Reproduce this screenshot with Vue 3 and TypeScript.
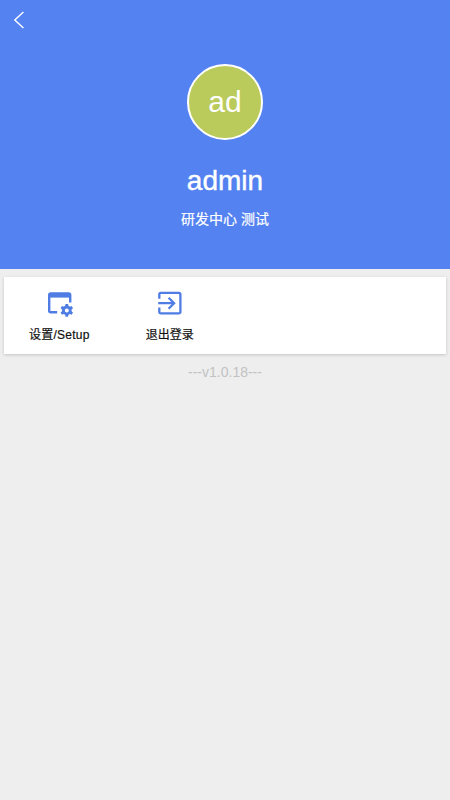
<script setup lang="ts">
interface Action {
  id: 'setup' | 'logout'
  label: string
}

const user = { name: 'admin', initials: 'ad', department: '研发中心 测试' }
const version = '---v1.0.18---'
const actions: Action[] = [
  { id: 'setup', label: '设置/Setup' },
  { id: 'logout', label: '退出登录' },
]
const teeth: number[] = [0, 60, 120, 180, 240, 300]
</script>

<template>
  <main class="page">
    <header class="profile">
      <nav class="bar">
        <button class="back" type="button" aria-label="Back">
          <svg width="12" height="18" viewBox="0 0 12 18">
            <path d="M10.4 1 1.8 9l8.6 8" fill="none" stroke="#fff" stroke-width="1.4" />
          </svg>
        </button>
      </nav>
      <div class="avatar">{{ user.initials }}</div>
      <h1 class="name">{{ user.name }}</h1>
      <p class="department">{{ user.department }}</p>
    </header>

    <section class="card">
      <button v-for="action in actions" :key="action.id" class="action" type="button">
        <svg v-if="action.id === 'setup'" class="icon" viewBox="0 0 28 28">
          <path d="M12.2 22.2H5.7a1.5 1.5 0 0 1-1.5-1.5V5a1.5 1.5 0 0 1 1.5-1.5h18a1.5 1.5 0 0 1 1.5 1.5v7.5" fill="none" stroke="currentColor" stroke-width="2.4" />
          <path d="M4 3.4h21v4.2H4z" fill="currentColor" />
          <g transform="translate(21.8 20.4)">
            <path v-for="angle in teeth" :key="angle" d="M-1.7-3.8-1.3-6.4H1.3L1.7-3.8z" :transform="`rotate(${angle})`" fill="currentColor" />
            <circle r="3.4" fill="none" stroke="currentColor" stroke-width="2.8" />
          </g>
        </svg>
        <svg v-else class="icon" viewBox="0 0 28 28">
          <path d="M3.3 8.8V4.4a1.5 1.5 0 0 1 1.5-1.5h18.1a1.5 1.5 0 0 1 1.5 1.5v17.5a1.5 1.5 0 0 1-1.5 1.5H4.8a1.5 1.5 0 0 1-1.5-1.5v-4.4" fill="none" stroke="currentColor" stroke-width="2.3" />
          <path d="M2.2 13.2h15.6M12.6 7.7l5.5 5.5-5.5 5.5" fill="none" stroke="currentColor" stroke-width="2.3" />
        </svg>
        <span class="label" :class="action.id">{{ action.label }}</span>
      </button>
    </section>

    <footer class="version">{{ version }}</footer>
  </main>
</template>

<style>
body {
  margin: 0;
  background: #eee;
}
</style>

<style scoped>
.page {
  min-height: 100vh;
  background: #eee;
  font-family: "Liberation Sans", "Noto Sans CJK SC", sans-serif;
}
.profile {
  display: flex;
  flex-direction: column;
  align-items: center;
  box-sizing: border-box;
  height: 269px;
  background: #5482f1;
  color: #fff;
}
.bar {
  display: flex;
  align-items: center;
  align-self: stretch;
  height: 40px;
  padding-left: 13px;
}
button {
  border: 0;
  padding: 0;
  background: none;
  font: inherit;
}
.back {
  display: flex;
}
.avatar {
  display: flex;
  align-items: center;
  justify-content: center;
  box-sizing: border-box;
  width: 76px;
  height: 76px;
  margin-top: 24px;
  border: 2px solid #fff;
  border-radius: 50%;
  background: #bacb5b;
  font-size: 30px;
}
.name {
  margin: 24px 0 0;
  font-size: 28px;
  font-weight: 400;
  line-height: 34px;
  -webkit-text-stroke: 0.4px #fff;
}
.department {
  margin: 11px 0 0;
  font-size: 14px;
  line-height: 20px;
  -webkit-text-stroke: 0.2px #fff;
}
.card {
  display: grid;
  grid-template-columns: repeat(4, 1fr);
  box-sizing: border-box;
  height: 77px;
  margin: 8px 4px 0;
  background: #fff;
  box-shadow: 0 1px 3px rgba(0, 0, 0, 0.18);
}
.action {
  display: flex;
  flex-direction: column;
  align-items: center;
  padding-top: 13px;
  color: #4f7de3;
}
.icon {
  width: 28px;
  height: 28px;
}
.label {
  margin-top: 8px;
  color: #111;
  font-size: 12px;
  line-height: 18px;
  -webkit-text-stroke: 0.2px #111;
}
.label.setup {
  letter-spacing: 0.25px;
}
.version {
  margin-top: 9px;
  color: #c2c2c2;
  font-size: 14px;
  line-height: 18px;
  text-align: center;
}
</style>
